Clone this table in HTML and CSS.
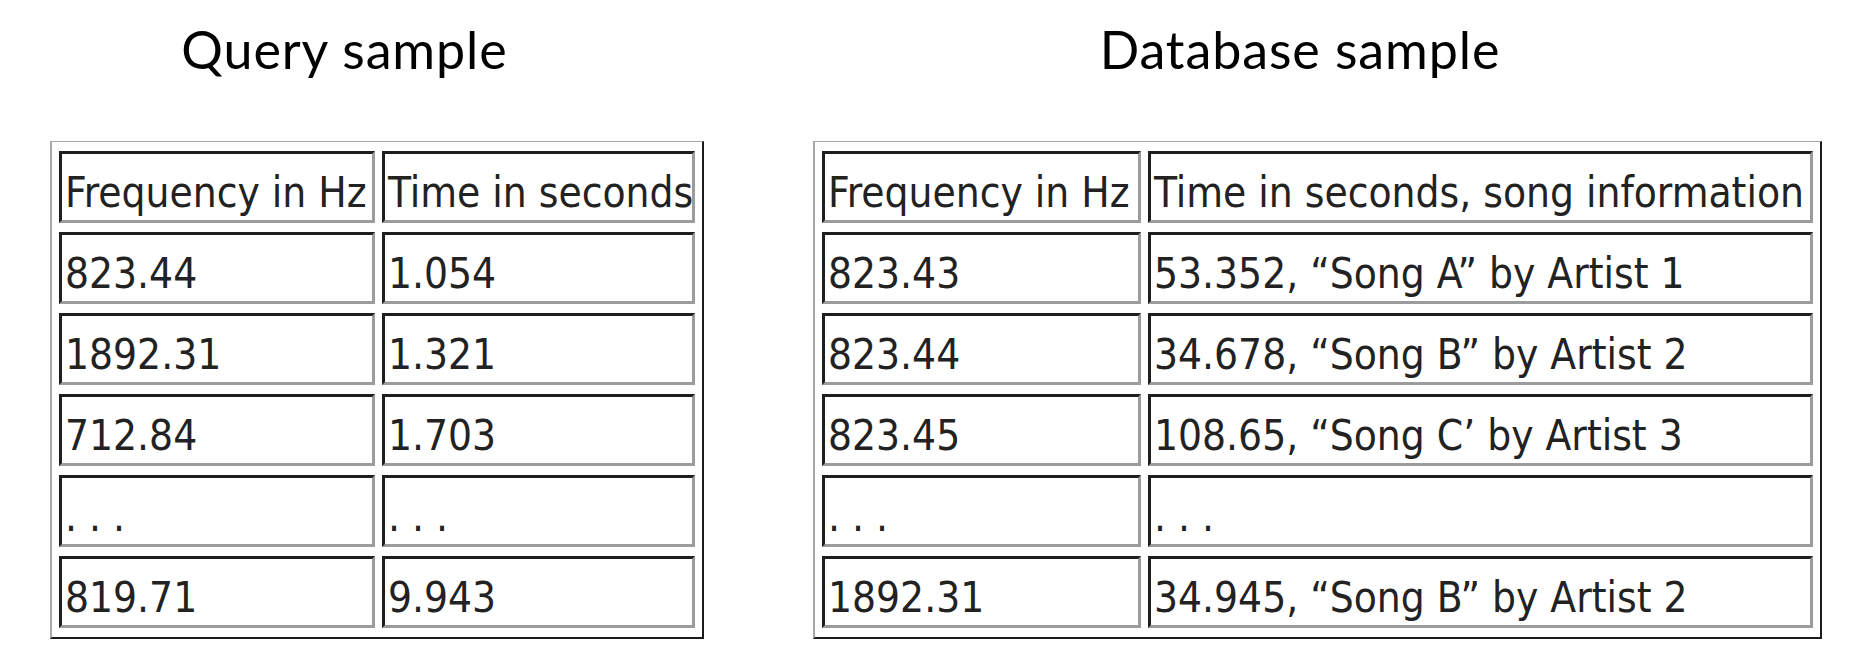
FILE: index.html
```html
<!DOCTYPE html>
<html>
<head>
<meta charset="utf-8">
<link rel="stylesheet" href="styles.css">
</head>
<body>
<div class="page">
  <section class="panel panel-query">
    <h2 class="title">Query sample</h2>
    <table class="grid">
      <colgroup><col class="q1"><col class="q2"></colgroup>
      <tr><td>Frequency in Hz</td><td>Time in seconds</td></tr>
      <tr><td>823.44</td><td>1.054</td></tr>
      <tr><td>1892.31</td><td>1.321</td></tr>
      <tr><td>712.84</td><td>1.703</td></tr>
      <tr><td>. . .</td><td>. . .</td></tr>
      <tr><td>819.71</td><td>9.943</td></tr>
    </table>
  </section>
  <section class="panel panel-db">
    <h2 class="title">Database sample</h2>
    <table class="grid">
      <colgroup><col class="d1"><col class="d2"></colgroup>
      <tr><td>Frequency in Hz</td><td>Time in seconds, song information</td></tr>
      <tr><td>823.43</td><td>53.352, “Song A” by Artist 1</td></tr>
      <tr><td>823.44</td><td>34.678, “Song B” by Artist 2</td></tr>
      <tr><td>823.45</td><td>108.65, “Song C’ by Artist 3</td></tr>
      <tr><td>. . .</td><td>. . .</td></tr>
      <tr><td>1892.31</td><td>34.945, “Song B” by Artist 2</td></tr>
    </table>
  </section>
</div>
</body>
</html>
```
FILE: styles.css
```css
html, body {
  margin: 0;
  padding: 0;
  background: #ffffff;
}

.page {
  display: flex;
  align-items: flex-start;
  gap: 109px;
  padding-left: 50px;
}

.panel {
  display: flex;
  flex-direction: column;
}

.title {
  margin: 0 0 61px 0;
  padding-top: 19px;
  font-family: Lato, "Open Sans", sans-serif;
  font-weight: 400;
  font-size: 52px;
  letter-spacing: 0.9px;
  line-height: 61px;
  color: #000000;
  text-align: center;
}

.panel-query .title {
  padding-right: 65px;
}

.panel-db .title {
  padding-right: 35px;
}

.grid {
  table-layout: fixed;
  border-collapse: separate;
  border-spacing: 7px 9px;
  border-style: solid;
  border-width: 1px 2px 2px 2px;
  border-color: #a8a8a8 #1c1c1c #1c1c1c #a8a8a8;
  font-family: "DejaVu Sans Condensed", "DejaVu Sans", sans-serif;
  font-stretch: condensed;
  font-size: 42px;
  color: #222222;
}

.panel-query .grid {
  width: 654px;
}

.panel-db .grid {
  width: 1008px;
}

.q1 { width: 316px; }
.q2 { width: 313px; }
.d1 { width: 319px; }
.d2 { width: 665px; }

.grid td {
  box-sizing: border-box;
  height: 72px;
  padding: 12px 0 0 3px;
  border-style: solid;
  border-width: 3px;
  border-color: #1e1e1e #9c9c9c #9c9c9c #1e1e1e;
  white-space: nowrap;
  overflow: hidden;
  vertical-align: middle;
  line-height: 50px;
}
```
